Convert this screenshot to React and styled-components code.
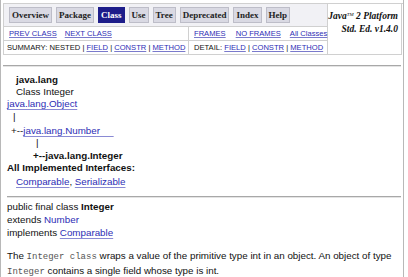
import React from "react"
import styled, { createGlobalStyle } from "styled-components"

const GlobalStyle = createGlobalStyle`
  html, body {
    margin: 0;
    padding: 0;
    background: #fff;
  }
  body {
    font-family: "Liberation Sans", Arial, sans-serif;
    color: #111;
  }
`

const Page = styled.div`
  width: 402px;
  height: 277px;
  border-left: 1px solid #b8b8b8;
  border-right: 1px solid #b8b8b8;
  overflow: hidden;
`

const NavBar = styled.div`
  display: grid;
  grid-template-columns: 185px 139px 74px;
  grid-template-rows: 23px 14px 14px;
  margin: 3px 0 0 2px;
  border-top: 1px solid #d0d0d0;
  border-left: 1px solid #d0d0d0;
`

const Cell = styled.div`
  border-right: 1px solid #d0d0d0;
  border-bottom: 1px solid #d0d0d0;
  display: flex;
  align-items: center;
  padding-left: ${p => p.$pad || 5}px;
  font-size: 7.6px;
  white-space: nowrap;
  background: ${p => p.$tint ? "#f1f1f5" : "#fff"};
`

const TabCell = styled(Cell)`
  grid-column: 1 / 3;
  gap: 4px;
`

const Tab = styled.span`
  display: inline-flex;
  align-items: center;
  height: 16px;
  padding: 0 2px;
  font-family: "Liberation Serif", "Times New Roman", serif;
  font-weight: bold;
  font-size: 9px;
  color: ${p => p.$active ? "#fff" : "#222"};
  background: ${p => p.$active ? "#1d1d8a" : "#d9d9e3"};
  border: 1px solid ${p => p.$active ? "#1d1d8a" : "#bdbdc8"};
  box-sizing: border-box;
`

const Brand = styled.div`
  grid-column: 3;
  grid-row: 1 / 4;
  border-right: 1px solid #d0d0d0;
  border-bottom: 1px solid #d0d0d0;
  text-align: right;
  padding: 4px 3px 0 0;
  font-family: "Liberation Serif", "Times New Roman", serif;
  font-weight: bold;
  font-style: italic;
  font-size: 9.5px;
  line-height: 13px;
  sup {
    font-size: 5px;
    vertical-align: 3px;
    font-weight: normal;
  }
`

const NavLink = styled.a`
  color: #2d2db5;
  text-decoration: underline;
  text-decoration-color: #7a7acc;
  margin-right: ${p => p.$space || 0}px;
`

const Rule = styled.div`
  height: 0;
  border-top: 1px solid #a8a8a8;
  border-bottom: 1px solid #e4e4e4;
  margin: ${p => p.$top}px 2px 0 ${p => p.$left || 2}px;
`

const Body = styled.div`
  padding-left: 6px;
  font-size: 9.8px;
  line-height: 12px;
`

const Line = styled.div`
  margin-top: ${p => p.$gap || 0}px;
  padding-left: ${p => p.$indent || 0}px;
  font-weight: ${p => p.$bold ? "bold" : "normal"};
  white-space: nowrap;
`

const Link = styled.a`
  color: #2d2db5;
  text-decoration: ${p => p.$plain ? "none" : "underline"};
  text-decoration-color: #8a8ad4;
  text-underline-offset: 2px;
`

const Code = styled.code`
  font-family: "Liberation Mono", "Courier New", monospace;
  font-size: 9px;
  color: #555;
`

const tabs = ["Overview", "Package", "Class", "Use", "Tree", "Deprecated", "Index", "Help"]

export default function App() {
  return (
    <Page>
      <GlobalStyle />
      <NavBar>
        <TabCell $tint>
          {tabs.map(t => (
            <Tab key={t} $active={t === "Class"}>{t}</Tab>
          ))}
        </TabCell>
        <Brand>
          Java<sup>TM</sup> 2 Platform
          <br />
          Std. Ed. v1.4.0
        </Brand>
        <Cell>
          <NavLink $space={8}>PREV CLASS</NavLink>
          <NavLink>NEXT CLASS</NavLink>
        </Cell>
        <Cell>
          <NavLink $space={10}>FRAMES</NavLink>
          <NavLink $space={9}>NO FRAMES</NavLink>
          <NavLink>All Classes</NavLink>
        </Cell>
        <Cell $pad={3}>
          SUMMARY: NESTED |&nbsp;<NavLink>FIELD</NavLink>&nbsp;|&nbsp;<NavLink>CONSTR</NavLink>&nbsp;|&nbsp;<NavLink>METHOD</NavLink>
        </Cell>
        <Cell>
          DETAIL:&nbsp;<NavLink>FIELD</NavLink>&nbsp;|&nbsp;<NavLink>CONSTR</NavLink>&nbsp;|&nbsp;<NavLink>METHOD</NavLink>
        </Cell>
      </NavBar>

      <Rule $top={10} />

      <Body>
        <Line $gap={7} $indent={9} $bold>java.lang</Line>
        <Line $indent={9}>Class Integer</Line>
        <Line><Link>java.lang.Object</Link></Line>
        <Line $gap={1} $indent={6}>|</Line>
        <Line $gap={2} $indent={4}>+--<Link>java.lang.Number&nbsp;&nbsp;&nbsp;&nbsp;&nbsp;</Link></Line>
        <Line $indent={29}>|</Line>
        <Line $gap={1} $indent={26} $bold>+--java.lang.Integer</Line>
        <Line $bold>All Implemented Interfaces:</Line>
        <Line $gap={2} $indent={9}><Link>Comparable</Link>, <Link>Serializable</Link></Line>
      </Body>

      <Rule $top={8} $left={6} />

      <Body>
        <Line $gap={3}>public final class <b>Integer</b></Line>
        <Line $gap={1}>extends <Link $plain>Number</Link></Line>
        <Line $gap={1}>implements <Link>Comparable</Link></Line>
        <Line $gap={11}>
          The <Code>Integer class</Code> wraps a value of the primitive type int in an object. An object of type
        </Line>
        <Line $gap={2}>
          <Code>Integer</Code> contains a single field whose type is int.
        </Line>
      </Body>
    </Page>
  )
}
